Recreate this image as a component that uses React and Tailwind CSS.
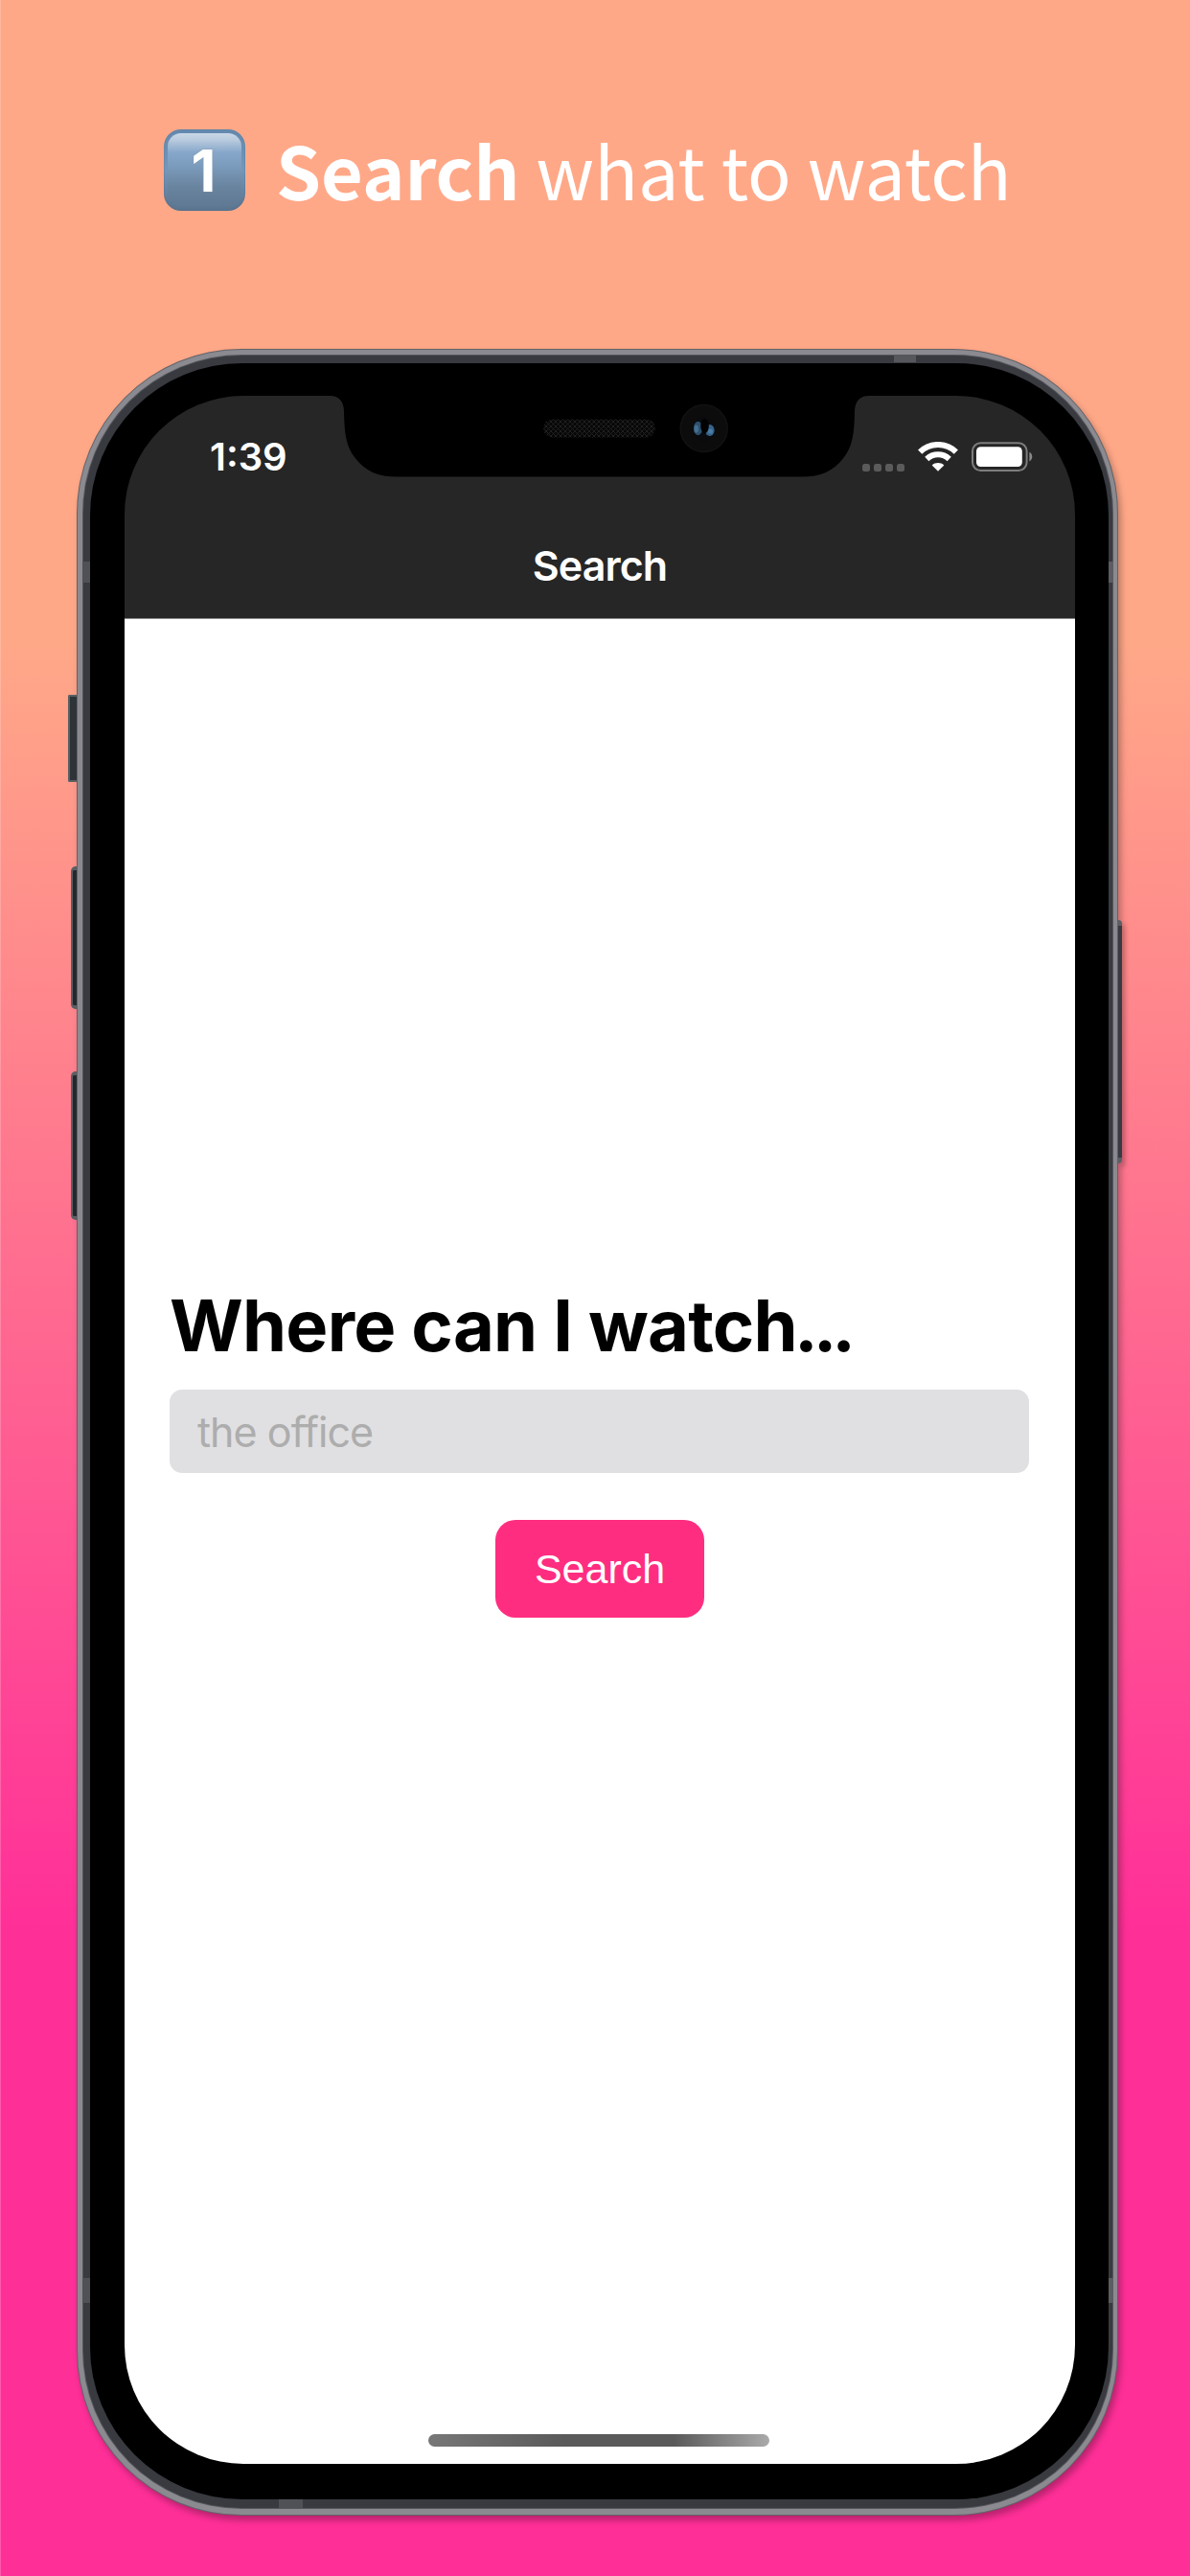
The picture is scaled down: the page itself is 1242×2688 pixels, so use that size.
import React from "react";

function KeycapOne() {
  return (
    <div className="mt-[135px] h-[85px] w-[85px] shrink-0 rounded-[18px] bg-linear-to-b from-[#5c84aa] via-[#6a8cae] to-[#56708a] p-px">
      <div className="h-[83px] w-[83px] rounded-[17px] bg-linear-to-b from-[#6489ae] via-[#7396b9] to-[#5b748e] p-[3px]">
        <div className="flex h-[77px] w-[77px] justify-center rounded-[14px] bg-[linear-gradient(to_bottom,#c9d8e7_0%,#b9cbde_9%,#86a7ca_26%,#7b9bbc_45%,#69849f_72%,#5f7994_100%)]">
          <span className="mt-[3px] -ml-[2px] h-[72px] font-[Inter,sans-serif] text-[60px] leading-[72px] font-bold text-white [text-shadow:0_0_2px_#8a9aaa]">
            1
          </span>
        </div>
      </div>
    </div>
  );
}

function Wifi() {
  return (
    <svg className="h-[31px] w-[42px]" viewBox="0 0 42 31" fill="none">
      <path d="M2.2 10.6C12.5 0.4 29.5 0.4 39.8 10.6" stroke="#fff" strokeWidth="6" />
      <path d="M9.3 18C15.8 11.8 26.2 11.8 32.7 18" stroke="#fff" strokeWidth="6" />
      <path d="M14.7 24.4C18.2 21.2 23.8 21.2 27.3 24.4L21 30.8Z" fill="#fff" />
    </svg>
  );
}

function Battery() {
  return (
    <svg className="h-[31px] w-[64px]" viewBox="0 0 64 31">
      <rect x="1" y="1.2" width="56.6" height="28.8" rx="8.5" fill="none" stroke="#7d7d7d" strokeWidth="2" />
      <rect x="5" y="5.2" width="47.8" height="20.8" rx="4.5" fill="#fff" />
      <path d="M60.4 10.8C64.2 12.4 64.2 18.8 60.4 20.4Z" fill="#8a8a8a" />
    </svg>
  );
}

function Notch() {
  return (
    <svg className="absolute top-[411px] left-[340px] h-[88px] w-[572px]" viewBox="340 411 572 88">
      <defs>
        <pattern id="mesh" width="5" height="5" patternUnits="userSpaceOnUse">
          <path d="M0 0L5 5M5 0L0 5" stroke="#222" strokeWidth="0.9" />
        </pattern>
      </defs>
      <path
        d="M340 411V413H344C354 413 359 419 359 430C359.500 452 361 465 370 477C381 492 395 497.500 414 497.500H837C856 497.500 870 492 881 477C890 465 891.500 452 892 430C892 419 897 413 907 413H912V411Z"
        fill="#000"
      />
      <rect x="567" y="437.500" width="117" height="19" rx="9.500" fill="#070707" />
      <rect x="567" y="437.500" width="117" height="19" rx="9.500" fill="url(#mesh)" />
      <circle cx="734.700" cy="447" r="24.500" fill="#0c0c0c" stroke="#121212" strokeWidth="1.500" />
      <ellipse cx="735" cy="447.500" rx="11.500" ry="12" fill="#090b0e" />
      <ellipse cx="728.500" cy="447" rx="4.700" ry="7.200" fill="#2c506d" />
      <ellipse cx="726.800" cy="447.500" rx="2.200" ry="4" fill="#456f90" />
      <ellipse cx="740.800" cy="449" rx="4.800" ry="6" fill="#35648b" />
      <ellipse cx="741.500" cy="450" rx="2.400" ry="2.600" fill="#4a7da6" />
      <ellipse cx="735.500" cy="444.500" rx="4.300" ry="7.500" fill="#020203" />
    </svg>
  );
}

function Screen() {
  return (
    <div className="flex h-[2158px] w-[992px] flex-col overflow-hidden rounded-[124px] font-[Inter,sans-serif]">
      <header className="h-[233px] border-b border-[#8d8d8d] bg-[#262626]">
        <div className="flex h-[88px] justify-between pt-[39px] pr-[44px] pl-[89px]">
          <span className="text-[40px] leading-[49px] font-semibold text-white">1:39</span>
          <div className="mt-[9px] flex h-[31px] items-end">
            <div className="mr-[14px] flex gap-1">
              <i className="h-2 w-2 rounded-[2.5px] bg-[#5b5b5b]" />
              <i className="h-2 w-2 rounded-[2.5px] bg-[#5b5b5b]" />
              <i className="h-2 w-2 rounded-[2.5px] bg-[#5b5b5b]" />
              <i className="h-2 w-2 rounded-[2.5px] bg-[#5b5b5b]" />
            </div>
            <Wifi />
            <div className="ml-[14px]">
              <Battery />
            </div>
          </div>
        </div>
        <h1 className="mt-[63px] text-center text-[43px] leading-[52px] font-semibold tracking-[-0.9px] text-white">
          Search
        </h1>
      </header>
      <main className="flex flex-1 flex-col bg-white pt-[692px] pr-[48px] pl-[47px]">
        <h2 className="text-[74px] leading-[90px] font-bold tracking-[-0.75px] text-black">
          Where can I watch<span className="-ml-[3px] tracking-[-5px]">...</span>
        </h2>
        <input
          className="mt-[22px] h-[87px] rounded-[13px] bg-[#e0e0e2] px-[29px] text-[43px] tracking-[-0.95px] text-black outline-none placeholder:text-[#adadad] placeholder:opacity-100"
          placeholder="the office"
        />
        <button className="mt-[49px] ml-[340px] h-[102px] w-[218px] rounded-[21px] bg-[#ff2d80] font-['Liberation_Sans',Arial,sans-serif] text-[43px] leading-[48px] text-white">
          Search
        </button>
        <div className="mt-auto mb-[18px] ml-[270px] h-[13px] w-[356px] rounded-full bg-[linear-gradient(to_right,#777_0%,#5a5a5a_40%,#5a5a5a_72%,#aaa_100%)]" />
      </main>
    </div>
  );
}

function Phone() {
  return (
    <div className="ml-[80px] w-[1087px] rounded-[172px] bg-[#626368] p-px shadow-[3px_5px_7px_rgba(0,0,0,0.28)]">
      <div className="rounded-[171px] bg-[#8a8a90] pt-[5px] pr-[4px] pb-[6px] pl-[5px]">
        <div className="rounded-[166px] bg-[#55565c] p-px">
          <div className="rounded-[165px] bg-[#383a40] pt-[8px] pr-[4px] pb-[9px] pl-[7px]">
            <div className="rounded-[159px] bg-black pt-[34px] pr-[35px] pb-[37px] pl-[36px]">
              <Screen />
            </div>
          </div>
        </div>
      </div>
    </div>
  );
}

export default function App() {
  return (
    <div className="relative h-[2688px] w-[1242px] overflow-hidden bg-[linear-gradient(to_bottom,#ffa888_0%,#ffa888_25%,#ff2f98_75%,#ff2f98_100%)]">
      <div className="flex h-[364px] items-start pl-[171px]">
        <KeycapOne />
        <p className="mt-[121px] ml-[32px] font-['Noto_Sans_CJK_JP',sans-serif] text-[75.5px] leading-[110px] whitespace-nowrap text-white">
          <b className="font-bold">Search</b> what to watch
        </p>
      </div>

      <Phone />

      {/* speaker, camera and their housing over the screen */}
      <Notch />

      {/* side buttons */}
      <div className="absolute top-[725px] left-[71px] h-[91px] w-[9px] rounded-l-[2px] border-2 border-r-0 border-[#5b5f63] bg-[#2e3338]" />
      <div className="absolute top-[904px] left-[74px] h-[149px] w-[6px] rounded-l-[5px] border-y-4 border-l-2 border-[#5b5f63] bg-[#24282c]" />
      <div className="absolute top-[1118px] left-[74px] h-[155px] w-[6px] rounded-l-[5px] border-y-4 border-l-2 border-[#5b5f63] bg-[#24282c]" />
      <div className="absolute top-[960px] left-[1167px] h-[254px] w-[4px] rounded-r-[4px] border-y-[6px] border-[#5b5f63] bg-[#383a42] shadow-[3px_4px_5px_rgba(0,0,0,0.25)]" />

      {/* antenna bands */}
      <div className="absolute top-[586px] left-[86px] h-[22px] w-[8px] bg-[#505157]" />
      <div className="absolute top-[2377px] left-[86px] h-[26px] w-[8px] bg-[#505157]" />
      <div className="absolute top-[371px] left-[933px] h-[7px] w-[23px] bg-[#56575c]" />
      <div className="absolute top-[586px] left-[1157px] h-[22px] w-[5px] bg-[#5c5d62]" />
      <div className="absolute top-[2377px] left-[1157px] h-[26px] w-[5px] bg-[#5c5d62]" />
      <div className="absolute top-[2608px] left-[291px] h-[9px] w-[25px] bg-[#505157]" />

      <div className="absolute top-0 left-0 h-full w-px bg-white/20" />
    </div>
  );
}
